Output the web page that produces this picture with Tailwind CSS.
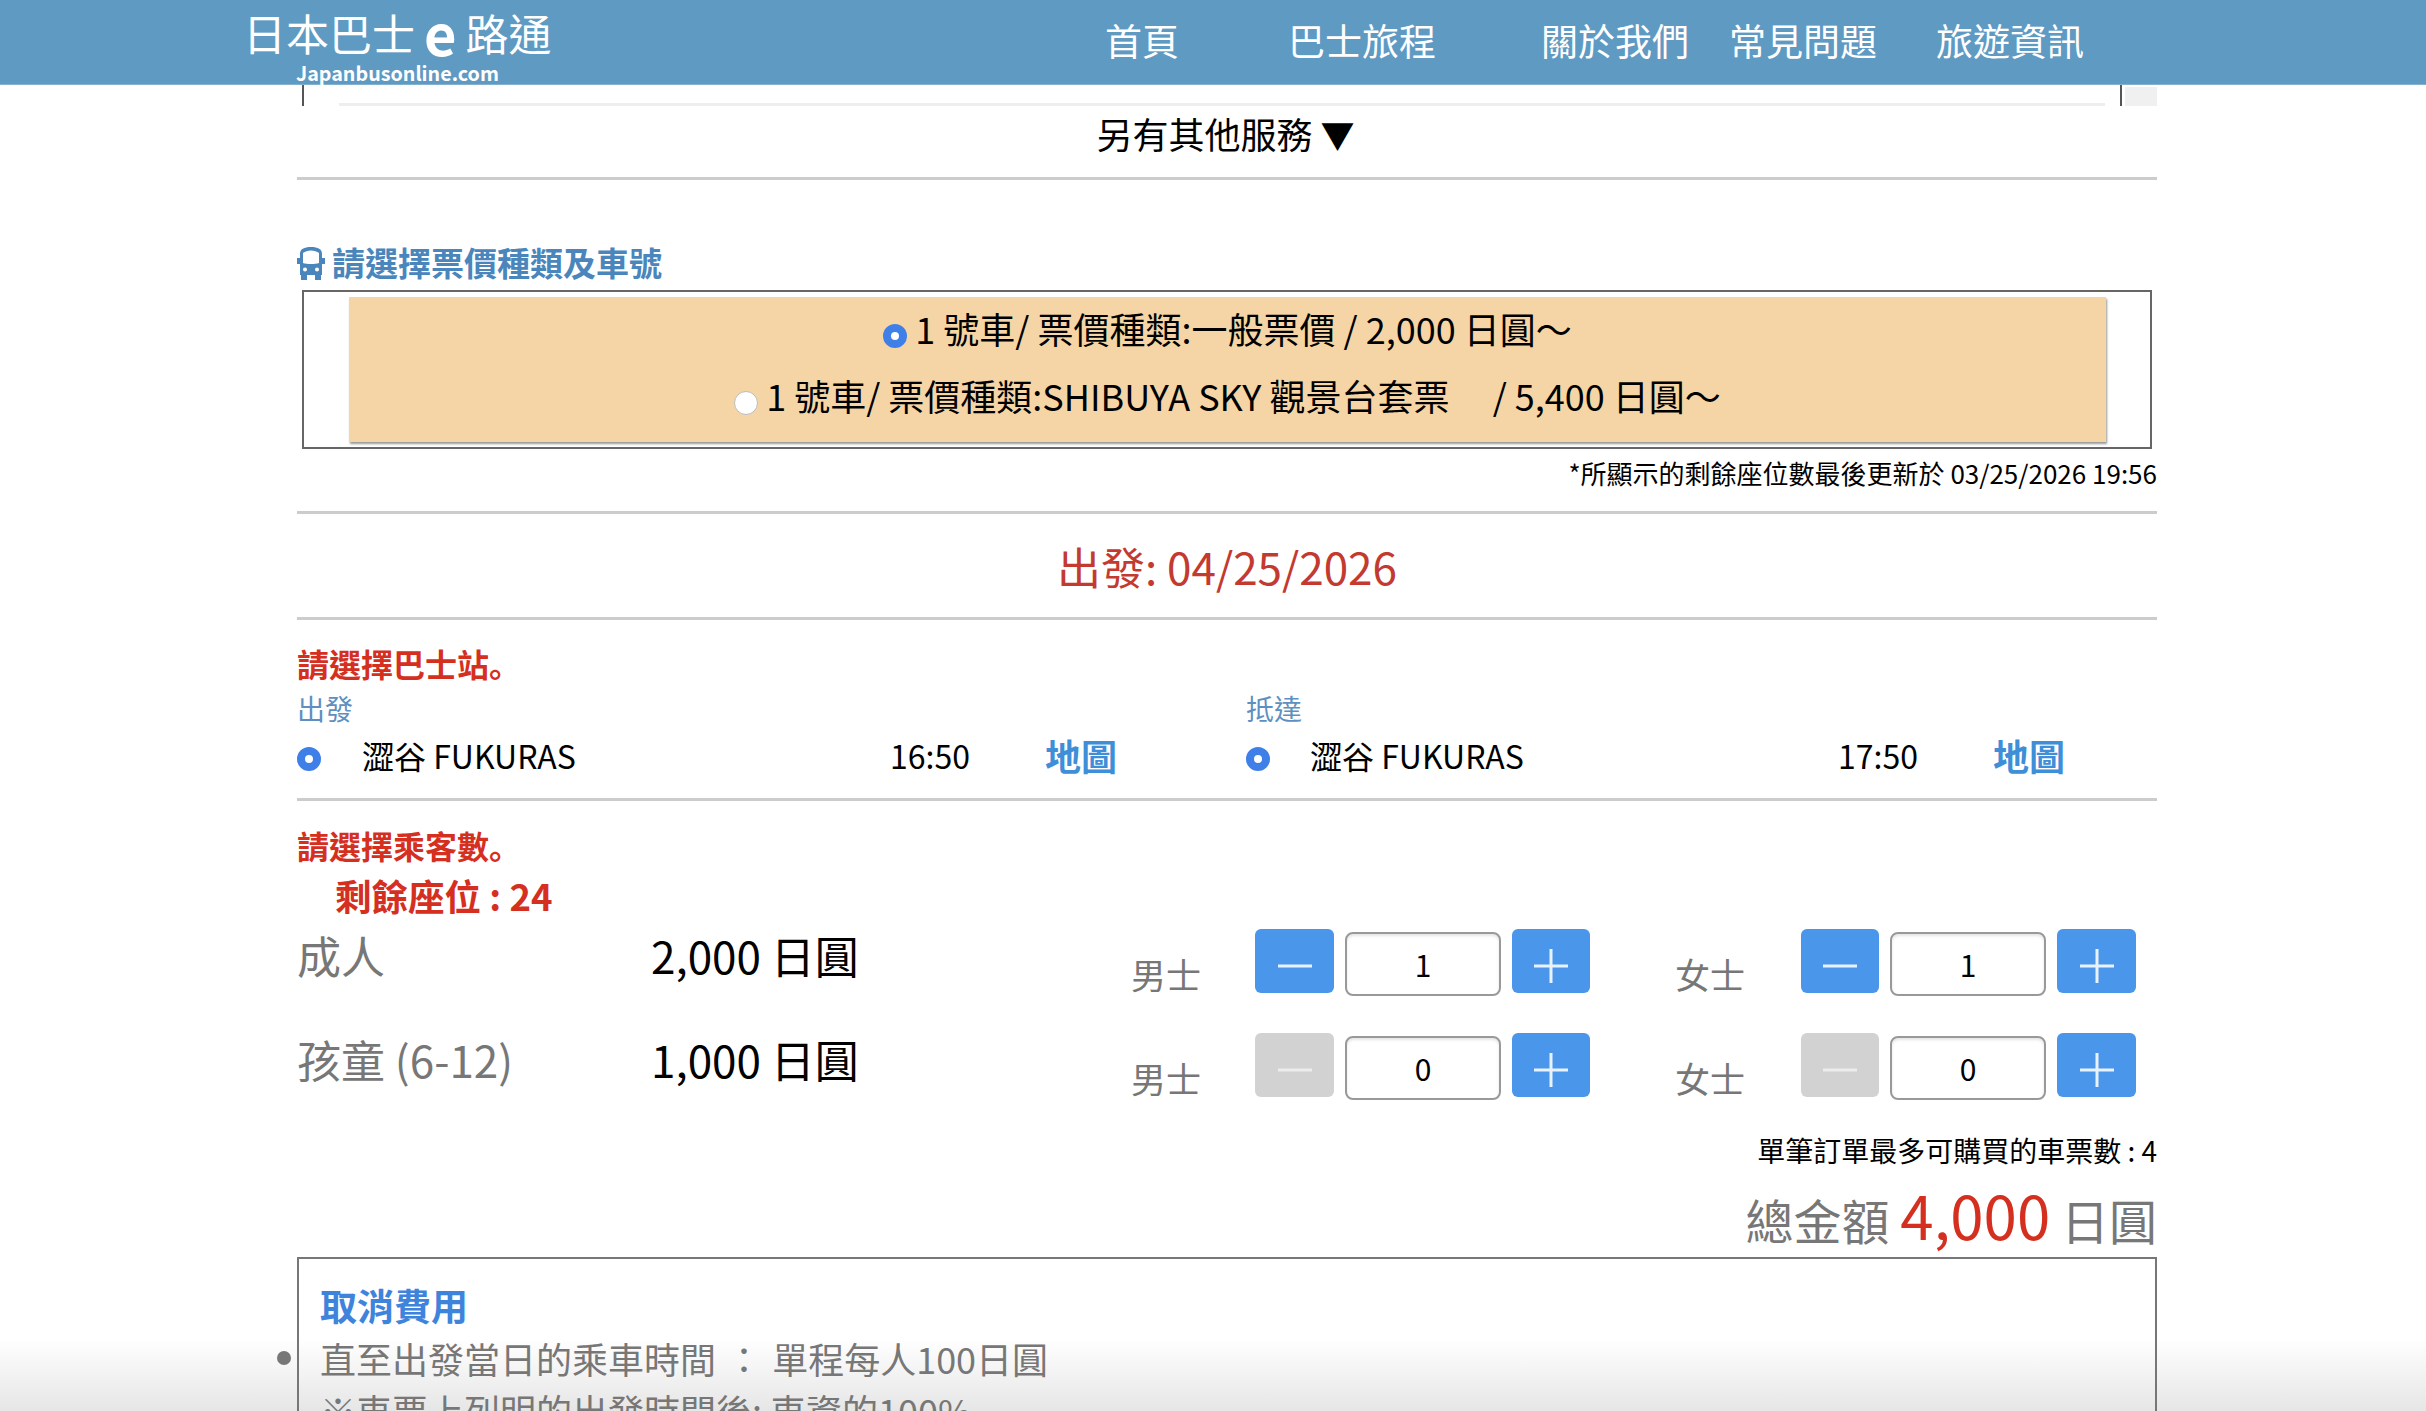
<!DOCTYPE html>
<html lang="zh-Hant">
<head>
    <meta charset="UTF-8">
    <title>日本巴士e路通</title>
    <script src="https://cdn.jsdelivr.net/npm/@tailwindcss/browser@4"></script>
</head>
<body class="bg-white font-['Noto_Sans_CJK_TC','Noto_Sans',sans-serif] text-black">
<div class="relative w-[2426px] h-[1411px] overflow-hidden">

    <!-- Bottom fade, sits behind the content -->
    <div class="absolute inset-x-0 bottom-0 h-[72px] bg-linear-to-b from-white to-[#e6e6e6]"></div>

    <!-- Header -->
    <header class="relative h-[85px] bg-[#5f9ac3] flex border-b border-[#86b0cf] text-white">
        <div class="ml-[243px] w-[862px] shrink-0">
            <div class="flex items-center h-[62px] pt-[1px] text-[43px] leading-[58px]">
                <span>日本巴士</span>
                <span class="mx-[9px] text-[56px] leading-[58px] font-bold">e</span>
                <span>路通</span>
            </div>
            <div class="ml-[53px] text-[19.7px] leading-[22px] font-bold">Japanbusonline.com</div>
        </div>
        <nav class="flex text-[37px] leading-[80px]">
            <a>首頁</a>
            <a class="ml-[109px]">巴士旅程</a>
            <a class="ml-[105px]">關於我們</a>
            <a class="ml-[40px]">常見問題</a>
            <a class="ml-[59px]">旅遊資訊</a>
        </nav>
    </header>

    <main class="relative ml-[297px] w-[1860px]">
        <!-- Tail of the service list scrolled under the header -->
        <div class="flex h-[21px]">
            <div class="ml-[5px] w-[1820px] border-x-2 border-[#555] flex items-end">
                <div class="ml-[35px] mr-[15px] h-[3px] w-full bg-[#eeeeee]"></div>
            </div>
            <div class="ml-[3px] w-[32px] mt-[2px] bg-[#f0f0f0]"></div>
        </div>
        <div class="h-[74px] flex items-center justify-center text-[36px] leading-none pb-[16px] border-b-[3px] border-[#cccccc]">
            <span class="ml-[-3px]">另有其他服務 <span class="text-[34px]">▼</span></span>
        </div>

        <!-- Ticket type -->
        <div class="flex items-center h-[40px] mt-[63px] mb-[7px] text-[#4a86bb] text-[33px] font-bold">
            <svg class="w-[28px] h-[33px] mr-[7px] shrink-0" viewBox="0 0 28 33" fill="#4a86bb">
                <path d="M14 0c7 0 11 2 11 7v4h3v6h-3v11H3V17H0v-6h3V7c0-5 4-7 11-7Z"/>
                <path fill="#fff" d="M6 6c2-1.500 5-2.500 8-2.500s6 1 8 2.500v10c-2 .7-5 1-8 1s-6-.3-8-1Z"/>
                <path d="M4 27h6v6H4zM18 27h6v6h-6z"/>
                <circle cx="8" cy="22.500" r="2" fill="#fff"/>
                <circle cx="20" cy="22.500" r="2" fill="#fff"/>
            </svg>
            <span>請選擇票價種類及車號</span>
        </div>
        <div class="ml-[5px] w-[1850px] h-[159px] border-2 border-[#666666] pt-[5px] pl-[45px]">
            <div class="w-[1757px] h-[145px] bg-[#f5d5a5] shadow-[1px_2px_2px_#999] flex flex-col items-center text-[36px] leading-[67px]">
                <label class="flex items-center -mt-[2px]"><span class="w-[24px] h-[24px] mt-[14px] mr-[8px] rounded-full border-[8px] border-[#3f7fe8] bg-white"></span>1 號車/ 票價種類:一般票價 / 2,000 日圓～</label>
                <label class="flex items-center"><span class="w-[24px] h-[24px] mt-[14px] mr-[8px] rounded-full border border-[#bbbbbb] bg-white"></span>1 號車/ 票價種類:SHIBUYA SKY 觀景台套票 &nbsp; &nbsp; <span class="ml-[11px]">/</span>&nbsp;5,400 日圓～</label>
            </div>
        </div>
        <p class="text-right text-[26px] leading-[34px] mt-[7px]">*所顯示的剩餘座位數最後更新於 03/25/2026 19:56</p>

        <hr class="mt-[21px] border-t-[3px] border-[#cccccc]">
        <h2 class="h-[103px] flex items-center justify-center text-[44px] text-[#c33a30]">出發: 04/25/2026</h2>
        <hr class="border-t-[3px] border-[#cccccc]">

        <!-- Bus stops -->
        <div class="text-[#d5301f] text-[32px] leading-[40px] font-bold mt-[23px]">請選擇巴士站<span lang="zh-Hans" class="font-['Noto_Sans_CJK_SC']">。</span></div>
        <div class="grid grid-cols-[949px_911px] mt-[10px]">
            <div>
                <div class="text-[#5f8fc0] text-[28px] leading-[30px]">出發</div>
                <div class="grid grid-cols-[65px_528px_155px_1fr] items-center h-[64px] text-[32px]">
                    <span class="w-[24px] h-[24px] mt-[7px] rounded-full border-[8px] border-[#3f7fe8] bg-white"></span>
                    <span>澀谷 FUKURAS</span>
                    <span>16:50</span>
                    <span class="text-[36px] font-bold text-[#3f8ed8]">地圖</span>
                </div>
            </div>
            <div>
                <div class="text-[#5f8fc0] text-[28px] leading-[30px]">抵達</div>
                <div class="grid grid-cols-[64px_528px_155px_1fr] items-center h-[64px] text-[32px]">
                    <span class="w-[24px] h-[24px] mt-[7px] rounded-full border-[8px] border-[#3f7fe8] bg-white"></span>
                    <span>澀谷 FUKURAS</span>
                    <span>17:50</span>
                    <span class="text-[36px] font-bold text-[#3f8ed8]">地圖</span>
                </div>
            </div>
        </div>
        <hr class="mt-[11px] border-t-[3px] border-[#cccccc]">

        <!-- Passengers -->
        <div class="text-[#d5301f] text-[32px] leading-[40px] font-bold mt-[24px]">請選擇乘客數<span lang="zh-Hans" class="font-['Noto_Sans_CJK_SC']">。</span></div>
        <div class="text-[#d5301f] text-[36.5px] leading-[44px] font-bold ml-[38px] mt-[9px]">剩餘座位 : 24</div>

        <div class="flex h-[104px] mt-[11px]">
            <div class="w-[354px] text-[44px] leading-[52px] text-[#777777]">成人</div>
            <div class="w-[480px] text-[44px] leading-[52px]">2,000 日圓</div>
            <div class="w-[124px] text-[35px] leading-[46px] pt-[22px] text-[#777777]">男士</div>
            <div class="flex w-[420px] gap-[11px]">
                <button class="w-[79px] h-[64px] rounded-md bg-[#4a96ea] flex items-center justify-center"><svg class="w-[36px] h-[36px] mt-[10px]" viewBox="0 0 36 36"><path d="M1 18h34" stroke="#e8f2fc" stroke-width="3"/></svg></button>
                <input readonly value="1" class="w-[156px] h-[64px] mt-[3px] rounded-lg border-2 border-[#999999] bg-white shadow-[inset_0_2px_3px_#e5e5e5] text-center text-[30px]">
                <button class="w-[78px] h-[64px] rounded-md bg-[#4a96ea] flex items-center justify-center"><svg class="w-[36px] h-[36px] mt-[10px]" viewBox="0 0 36 36"><path d="M1 18h34M18 1v34" stroke="#e8f2fc" stroke-width="3"/></svg></button>
            </div>
            <div class="w-[126px] text-[35px] leading-[46px] pt-[22px] text-[#777777]">女士</div>
            <div class="flex gap-[11px]">
                <button class="w-[78px] h-[64px] rounded-md bg-[#4a96ea] flex items-center justify-center"><svg class="w-[36px] h-[36px] mt-[10px]" viewBox="0 0 36 36"><path d="M1 18h34" stroke="#e8f2fc" stroke-width="3"/></svg></button>
                <input readonly value="1" class="w-[156px] h-[64px] mt-[3px] rounded-lg border-2 border-[#999999] bg-white shadow-[inset_0_2px_3px_#e5e5e5] text-center text-[30px]">
                <button class="w-[79px] h-[64px] rounded-md bg-[#4a96ea] flex items-center justify-center"><svg class="w-[36px] h-[36px] mt-[10px]" viewBox="0 0 36 36"><path d="M1 18h34M18 1v34" stroke="#e8f2fc" stroke-width="3"/></svg></button>
            </div>
        </div>
        <div class="flex h-[96px]">
            <div class="w-[354px] text-[44px] leading-[52px] text-[#777777]">孩童 (6-12)</div>
            <div class="w-[480px] text-[44px] leading-[52px]">1,000 日圓</div>
            <div class="w-[124px] text-[35px] leading-[46px] pt-[22px] text-[#777777]">男士</div>
            <div class="flex w-[420px] gap-[11px]">
                <button class="w-[79px] h-[64px] rounded-md bg-[#d2d2d2] flex items-center justify-center"><svg class="w-[36px] h-[36px] mt-[10px]" viewBox="0 0 36 36"><path d="M1 18h34" stroke="#ececec" stroke-width="3"/></svg></button>
                <input readonly value="0" class="w-[156px] h-[64px] mt-[3px] rounded-lg border-2 border-[#999999] bg-white shadow-[inset_0_2px_3px_#e5e5e5] text-center text-[30px]">
                <button class="w-[78px] h-[64px] rounded-md bg-[#4a96ea] flex items-center justify-center"><svg class="w-[36px] h-[36px] mt-[10px]" viewBox="0 0 36 36"><path d="M1 18h34M18 1v34" stroke="#e8f2fc" stroke-width="3"/></svg></button>
            </div>
            <div class="w-[126px] text-[35px] leading-[46px] pt-[22px] text-[#777777]">女士</div>
            <div class="flex gap-[11px]">
                <button class="w-[78px] h-[64px] rounded-md bg-[#d2d2d2] flex items-center justify-center"><svg class="w-[36px] h-[36px] mt-[10px]" viewBox="0 0 36 36"><path d="M1 18h34" stroke="#ececec" stroke-width="3"/></svg></button>
                <input readonly value="0" class="w-[156px] h-[64px] mt-[3px] rounded-lg border-2 border-[#999999] bg-white shadow-[inset_0_2px_3px_#e5e5e5] text-center text-[30px]">
                <button class="w-[79px] h-[64px] rounded-md bg-[#4a96ea] flex items-center justify-center"><svg class="w-[36px] h-[36px] mt-[10px]" viewBox="0 0 36 36"><path d="M1 18h34M18 1v34" stroke="#e8f2fc" stroke-width="3"/></svg></button>
            </div>
        </div>

        <p class="text-right text-[28px] leading-[36px] mt-[3px]">單筆訂單最多可購買的車票數 : 4</p>
        <p class="text-right text-[48px] leading-[76px] text-[#777777] mt-[8px]">總金額 <span class="text-[60px] text-[#d5301f]">4,000</span> 日圓</p>

        <!-- Cancellation fee -->
        <section class="relative border-2 border-[#777777] h-[300px] pt-[23px] pl-[21px]">
            <h3 class="text-[37px] leading-[46px] font-bold text-[#3f84dc]">取消費用</h3>
            <ul class="text-[36px] leading-[52px] text-[#777777] mt-[4px]">
                <li class="relative">
                    <span class="absolute left-[-43px] top-[19px] w-[14px] h-[14px] rounded-full bg-[#777777]"></span>
                    直至出發當日的乘車時間 <span class="mx-[2px]">：</span> 單程每人100日圓
                </li>
                <li>※車票上列明的出發時間後: 車資的100%</li>
            </ul>
        </section>
    </main>
</div>
</body>
</html>
